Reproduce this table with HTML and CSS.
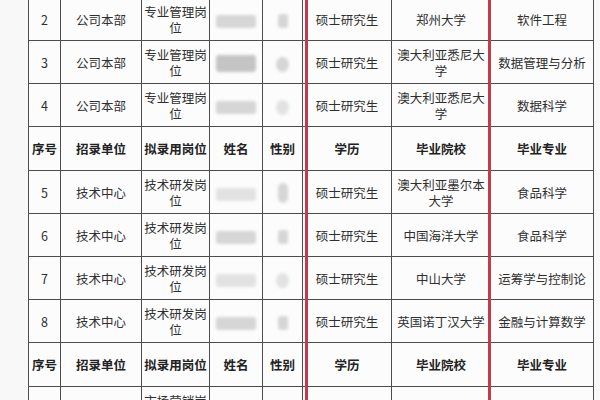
FILE: index.html
```html
<!DOCTYPE html>
<html lang="zh">
<head>
<meta charset="utf-8">
<link rel="stylesheet" href="styles.css">
</head>
<body>
<div class="wrap">
  <table class="grid">
    <colgroup>
      <col class="c-no"><col class="c-unit"><col class="c-post"><col class="c-name"><col class="c-sex"><col class="c-edu"><col class="c-school"><col class="c-major">
    </colgroup>
    <tbody>
      <tr><td>2</td><td>公司本部</td><td>专业管理岗位</td><td><span class="blob bn"></span></td><td><span class="blob bs"></span></td><td>硕士研究生</td><td>郑州大学</td><td>软件工程</td></tr>
      <tr><td>3</td><td>公司本部</td><td>专业管理岗位</td><td><span class="blob bn dark"></span></td><td><span class="blob bs round"></span></td><td>硕士研究生</td><td>澳大利亚悉尼大学</td><td>数据管理与分析</td></tr>
      <tr><td>4</td><td>公司本部</td><td>专业管理岗位</td><td><span class="blob bn"></span></td><td><span class="blob bs round light"></span></td><td>硕士研究生</td><td>澳大利亚悉尼大学</td><td>数据科学</td></tr>
      <tr class="head"><td>序号</td><td>招录单位</td><td>拟录用岗位</td><td>姓名</td><td>性别</td><td>学历</td><td>毕业院校</td><td>毕业专业</td></tr>
      <tr><td>5</td><td>技术中心</td><td>技术研发岗位</td><td><span class="blob bn light"></span></td><td><span class="blob bs tall"></span></td><td>硕士研究生</td><td>澳大利亚墨尔本大学</td><td>食品科学</td></tr>
      <tr><td>6</td><td>技术中心</td><td>技术研发岗位</td><td><span class="blob bn"></span></td><td><span class="blob bs"></span></td><td>硕士研究生</td><td>中国海洋大学</td><td>食品科学</td></tr>
      <tr><td>7</td><td>技术中心</td><td>技术研发岗位</td><td><span class="blob bn light"></span></td><td><span class="blob bs round light"></span></td><td>硕士研究生</td><td>中山大学</td><td>运筹学与控制论</td></tr>
      <tr><td>8</td><td>技术中心</td><td>技术研发岗位</td><td><span class="blob bn"></span></td><td><span class="blob bs"></span></td><td>硕士研究生</td><td>英国诺丁汉大学</td><td>金融与计算数学</td></tr>
      <tr class="head"><td>序号</td><td>招录单位</td><td>拟录用岗位</td><td>姓名</td><td>性别</td><td>学历</td><td>毕业院校</td><td>毕业专业</td></tr>
      <tr><td></td><td></td><td>市场营销岗位</td><td><span class="blob bn"></span></td><td></td><td></td><td></td><td></td></tr>
    </tbody>
  </table>
  <div class="red red-a"></div>
  <div class="red red-b"></div>
</div>
</body>
</html>
```

FILE: styles.css
```css
html, body {
  margin: 0;
  padding: 0;
  background: #f8f8f8;
  overflow: hidden;
}
body {
  width: 600px;
  height: 400px;
  font-family: "Noto Sans CJK SC", "Noto Sans", sans-serif;
  color: #2f2f2f;
}
.wrap {
  position: relative;
  width: 565px;
  margin: -3px 0 0 28px;
}
.grid {
  width: 565px;
  border-collapse: collapse;
  table-layout: fixed;
  background: #fcfcfc;
}
.c-no { width: 32px; }
.c-unit { width: 81px; }
.c-post { width: 68px; }
.c-name { width: 53px; }
.c-sex { width: 40px; }
.c-edu { width: 89px; }
.c-school { width: 99px; }
.c-major { width: 103px; }
.grid tr { height: 43px; }
.grid td {
  border: 1px solid #4d4d4d;
  text-align: center;
  vertical-align: middle;
  padding: 2px 2px 0;
  font-size: 12.5px;
  line-height: 16.5px;
  overflow: hidden;
}
.grid tr.head { height: 44px; }
.grid tr.head td {
  font-weight: bold;
  color: #222;
}
.blob {
  display: inline-block;
  vertical-align: middle;
  background: #d6d6d6;
  filter: blur(1.6px);
}
.bn {
  width: 40px;
  height: 13px;
  border-radius: 3px;
}
.bs {
  width: 10px;
  height: 14px;
  border-radius: 3px;
}
.bs.round { width: 13px; height: 15px; border-radius: 50%; }
.bs.tall { height: 20px; border-radius: 5px; }
.dark { background: #c4c4c4; height: 17px; }
.light { background: #e2e2e2; }
.red {
  position: absolute;
  top: 0;
  bottom: 0;
  width: 3px;
  background: #c33a4c;
}
.red-a { left: 277px; }
.red-b { left: 460px; }
```
